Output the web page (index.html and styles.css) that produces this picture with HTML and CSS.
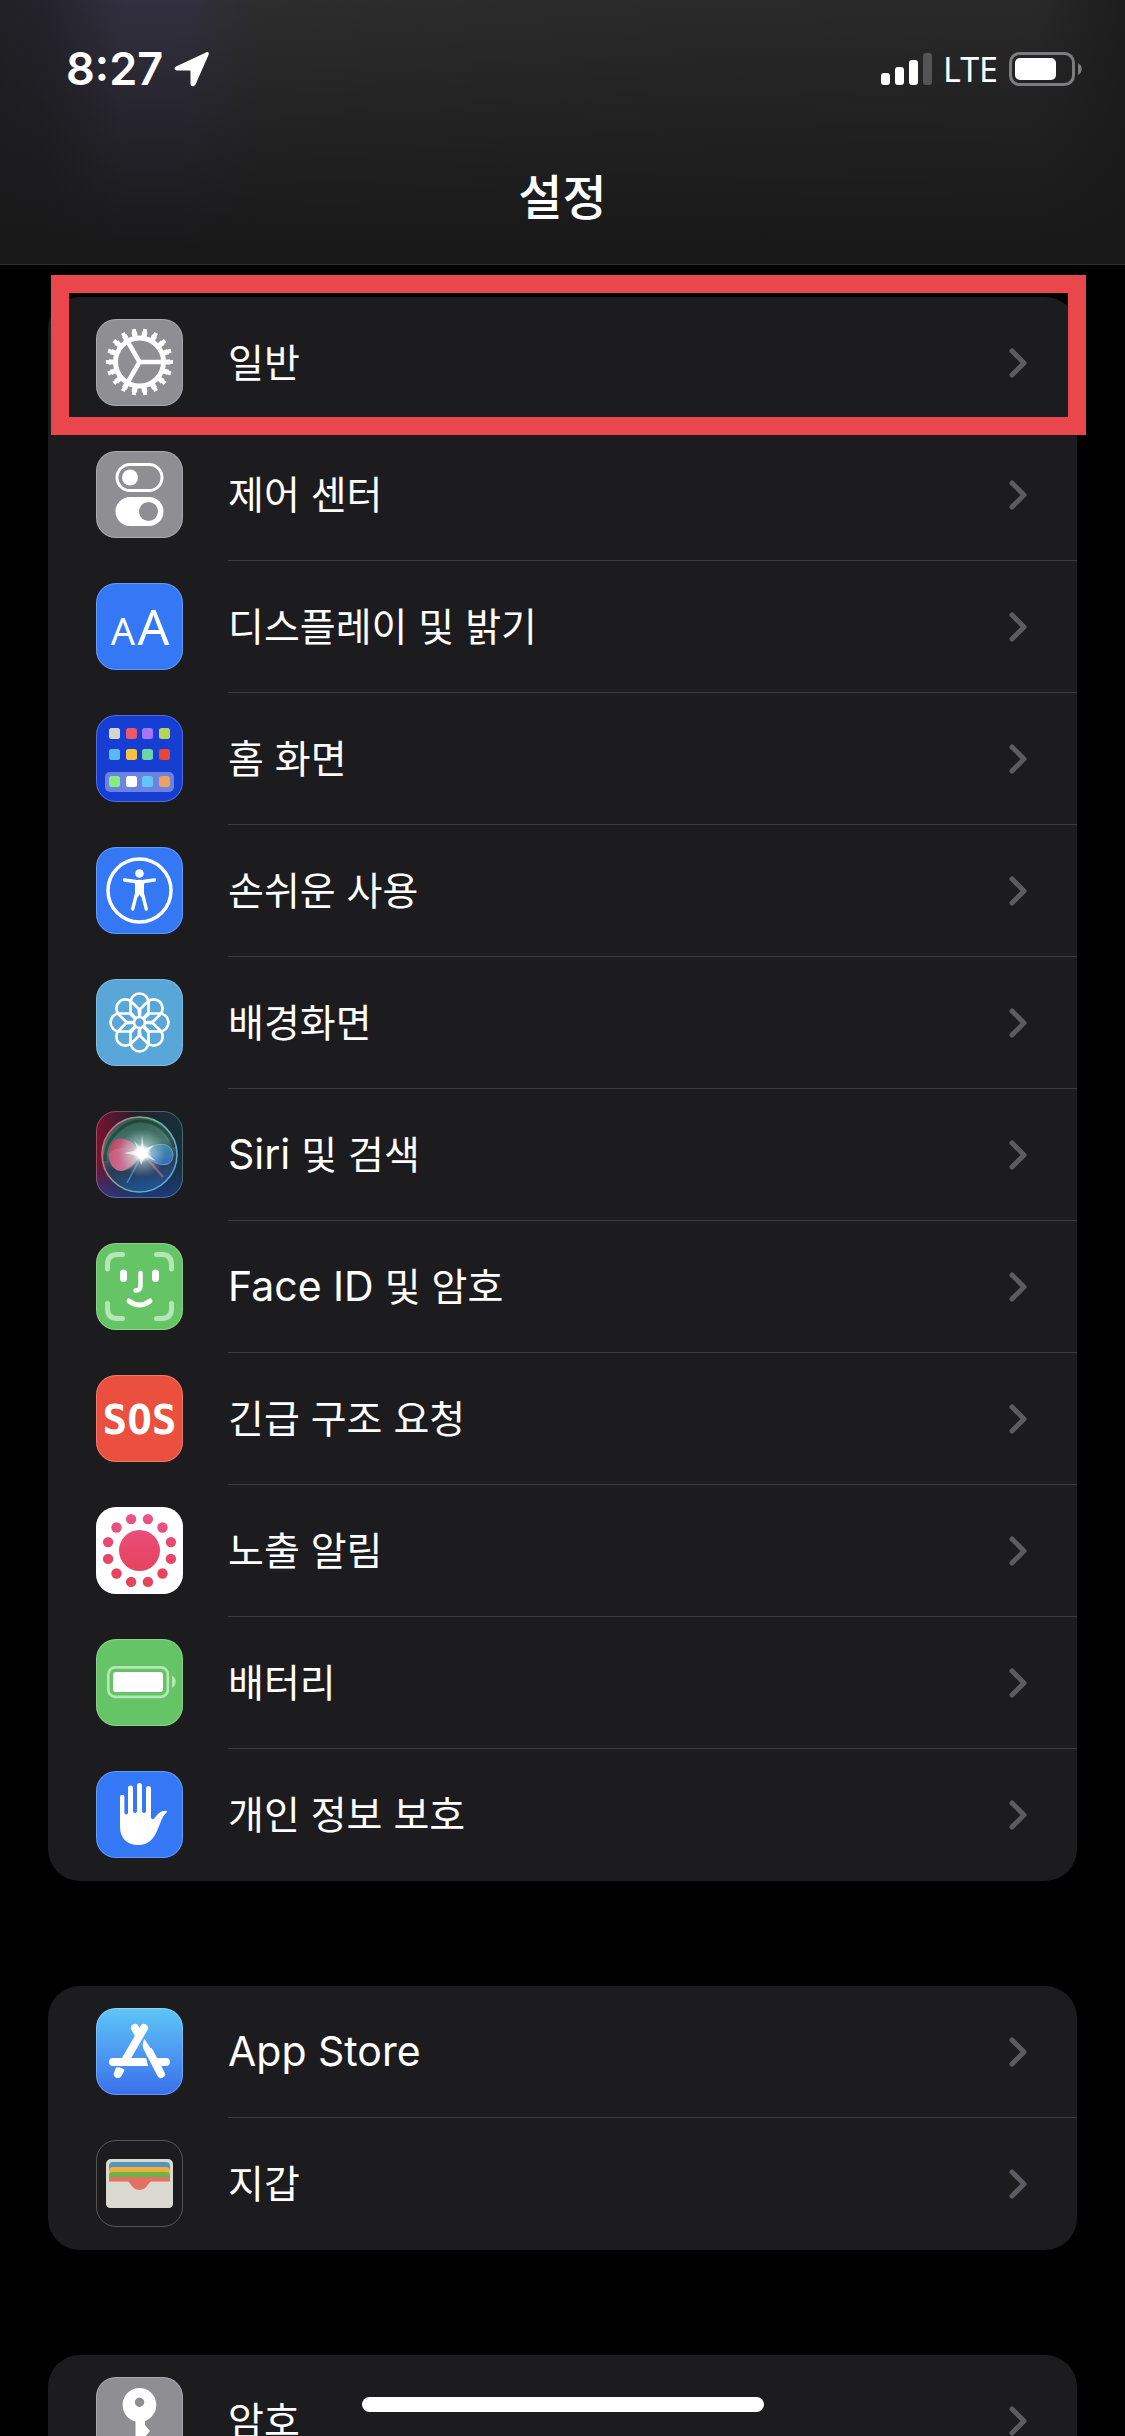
FILE: index.html
```html
<!DOCTYPE html>
<html lang="ko">
<head>
    <meta charset="UTF-8">
    <meta name="viewport" content="width=device-width, initial-scale=1.0">
    <title>설정</title>
    <link rel="stylesheet" href="styles.css">
</head>
<body>
    <!-- Shared shapes -->
    <svg class="defs" aria-hidden="true">
        <defs>
            <symbol id="chevron" viewBox="0 0 18 30">
                <path d="M3 3l12 12L3 27" fill="none" stroke="#5b5b60" stroke-width="5" stroke-linecap="round" stroke-linejoin="round"/>
            </symbol>
            <path id="petal" d="M-9 -20a9 9 0 0 1 18 0V-10L0 0L-9 -10Z"/>
            <linearGradient id="exposureFill" gradientUnits="userSpaceOnUse" x1="0" y1="6" x2="0" y2="80">
                <stop offset="0" stop-color="#e8578c"/>
                <stop offset=".5" stop-color="#e8476a"/>
                <stop offset="1" stop-color="#e74257"/>
            </linearGradient>
            <linearGradient id="siriBack" x1="0" y1="0" x2="1" y2="0">
                <stop offset="0" stop-color="#7a1230"/>
                <stop offset=".45" stop-color="#22202e"/>
                <stop offset="1" stop-color="#14323c"/>
            </linearGradient>
            <linearGradient id="siriLow" x1="0" y1="0" x2="0" y2="1">
                <stop offset=".6" stop-color="#1d3f8c" stop-opacity="0"/>
                <stop offset="1" stop-color="#1d3f8c" stop-opacity=".8"/>
            </linearGradient>
            <linearGradient id="siriOrb" x1=".3" y1="0" x2=".5" y2="1">
                <stop offset="0" stop-color="#2c5a4a"/>
                <stop offset=".4" stop-color="#4b7a72"/>
                <stop offset=".65" stop-color="#2c3a50"/>
                <stop offset="1" stop-color="#1f5596"/>
            </linearGradient>
            <linearGradient id="siriRing" x1="0" y1=".3" x2="1" y2=".7">
                <stop offset="0" stop-color="#d8607c"/>
                <stop offset=".5" stop-color="#6cbc96"/>
                <stop offset="1" stop-color="#5da4e4"/>
            </linearGradient>
            <linearGradient id="siriPink" x1="0" y1="0" x2="1" y2=".3">
                <stop offset="0" stop-color="#d62c58"/>
                <stop offset="1" stop-color="#d0a0b8"/>
            </linearGradient>
            <radialGradient id="siriGlow">
                <stop offset="0" stop-color="#fff"/>
                <stop offset=".2" stop-color="#fff"/>
                <stop offset=".4" stop-color="#d8f4f4" stop-opacity=".5"/>
                <stop offset="1" stop-color="#b8e0dc" stop-opacity="0"/>
            </radialGradient>
        </defs>
    </svg>

    <div class="screen">
        <header class="top">
            <div class="status">
                <div class="status-left">
                    <span class="time">8:27</span>
                    <svg class="location" viewBox="0 0 36 36" aria-hidden="true">
                        <path d="M32 1.500L2 15.500C0 16.500 0 19.500 3 19.500H15.500Q16.500 19.500 16.500 20.500V32.500C16.500 36 20 36 21.500 33.500L34.500 4C35.500 1.500 34 .5 32 1.500Z" fill="#fff"/>
                    </svg>
                </div>
                <div class="status-right">
                    <svg class="signal" viewBox="0 0 51 34" aria-hidden="true">
                        <rect x="0" y="21" width="9" height="12" rx="3" fill="#fff"/>
                        <rect x="14" y="15" width="9" height="18" rx="3" fill="#fff"/>
                        <rect x="28" y="8" width="9" height="25" rx="3" fill="#fff"/>
                        <rect x="42" y="1" width="9" height="32" rx="3" fill="#545456"/>
                    </svg>
                    <span class="carrier">LTE</span>
                    <svg class="charge" viewBox="0 0 74 34" aria-hidden="true">
                        <rect x="1.500" y="1.500" width="63" height="31" rx="9" fill="none" stroke="#7c7c7e" stroke-width="3"/>
                        <rect x="6" y="6" width="41" height="22" rx="5" fill="#fff"/>
                        <path d="M69 11c5 2.500 5 9.500 0 12z" fill="#7c7c7e"/>
                    </svg>
                </div>
            </div>
            <h1>설정</h1>
        </header>

        <main>
            <ul class="group">
                <li class="selected">
                    <a class="row" href="#general">
                        <svg class="icon gray" viewBox="0 0 87 87">
                            <g fill="none" stroke="#fff">
                                <circle cx="43.500" cy="43" r="24" stroke-width="5"/>
                                <circle cx="43.500" cy="43" r="28" stroke-width="5" pathLength="18" stroke-dasharray=".54 .46" stroke-dashoffset=".27"/>
                                <circle cx="43.500" cy="43" r="31.500" stroke-width="4" pathLength="18" stroke-dasharray=".36 .64" stroke-dashoffset=".18"/>
                                <path d="M43.500 43H66M43.500 43L32.500 24M43.500 43L32.500 62" stroke-width="4.500"/>
                            </g>
                        </svg>
                        <span class="label">일반</span>
                        <svg class="chevron"><use href="#chevron"/></svg>
                    </a>
                </li>
                <li>
                    <a class="row" href="#control-center">
                        <svg class="icon gray" viewBox="0 0 87 87">
                            <rect x="21" y="13.500" width="45" height="26" rx="13" fill="none" stroke="#fff" stroke-width="3"/>
                            <circle cx="34" cy="26.500" r="8" fill="#fff"/>
                            <rect x="19.500" y="46" width="48" height="29" rx="14.500" fill="#fff"/>
                            <circle cx="52.500" cy="60.500" r="9.500" fill="#8e8e93"/>
                        </svg>
                        <span class="label">제어 센터</span>
                        <svg class="chevron"><use href="#chevron"/></svg>
                    </a>
                </li>
                <li>
                    <a class="row" href="#display">
                        <svg class="icon blue" viewBox="0 0 87 87">
                            <text class="glyph-a" x="27" y="62" font-size="38">A</text>
                            <text class="glyph-a" x="57.500" y="62" font-size="50">A</text>
                        </svg>
                        <span class="label">디스플레이 및 밝기</span>
                        <svg class="chevron"><use href="#chevron"/></svg>
                    </a>
                </li>
                <li>
                    <a class="row" href="#home-screen">
                        <svg class="icon navy" viewBox="0 0 87 87">
                            <rect x="9" y="57" width="69" height="20" rx="5" fill="#6b82e2"/>
                            <rect x="13" y="13" width="11" height="11" rx="2.500" fill="#d5d7cf"/>
                            <rect x="30" y="13" width="11" height="11" rx="2.500" fill="#e9596b"/>
                            <rect x="46" y="13" width="11" height="11" rx="2.500" fill="#a775f5"/>
                            <rect x="63" y="13" width="11" height="11" rx="2.500" fill="#b6d257"/>
                            <rect x="13" y="34" width="11" height="11" rx="2.500" fill="#5bb9fa"/>
                            <rect x="30" y="34" width="11" height="11" rx="2.500" fill="#f5c344"/>
                            <rect x="46" y="34" width="11" height="11" rx="2.500" fill="#6dd4a8"/>
                            <rect x="63" y="34" width="11" height="11" rx="2.500" fill="#e5483b"/>
                            <rect x="13" y="61" width="11" height="11" rx="2.500" fill="#86ef7c"/>
                            <rect x="30" y="61" width="11" height="11" rx="2.500" fill="#fff"/>
                            <rect x="46" y="61" width="11" height="11" rx="2.500" fill="#62c6fb"/>
                            <rect x="63" y="61" width="11" height="11" rx="2.500" fill="#f0a05a"/>
                        </svg>
                        <span class="label">홈 화면</span>
                        <svg class="chevron"><use href="#chevron"/></svg>
                    </a>
                </li>
                <li>
                    <a class="row" href="#accessibility">
                        <svg class="icon blue" viewBox="0 0 87 87">
                            <circle cx="43.500" cy="43.500" r="31.500" fill="none" stroke="#fff" stroke-width="3.500"/>
                            <circle cx="43.500" cy="26.500" r="4.300" fill="#fff"/>
                            <path d="M28.500 33L39.500 34.500M58.500 33L47.500 34.500M40.500 47L36.700 62M46.500 47L50.300 62" fill="none" stroke="#fff" stroke-width="3.400" stroke-linecap="round"/>
                            <path d="M38 33.200Q43.500 32.200 49 33.200L48 38V46L47 50H45L43.500 47.500L42 50H40L39 46V38Z" fill="#fff"/>
                        </svg>
                        <span class="label">손쉬운 사용</span>
                        <svg class="chevron"><use href="#chevron"/></svg>
                    </a>
                </li>
                <li>
                    <a class="row" href="#wallpaper">
                        <svg class="icon sky" viewBox="0 0 87 87">
                            <g transform="translate(43.500 43.500)" fill="none" stroke="#fff" stroke-width="2.700" stroke-linejoin="round">
                                <use href="#petal"/>
                                <use href="#petal" transform="rotate(45)"/>
                                <use href="#petal" transform="rotate(90)"/>
                                <use href="#petal" transform="rotate(135)"/>
                                <use href="#petal" transform="rotate(180)"/>
                                <use href="#petal" transform="rotate(225)"/>
                                <use href="#petal" transform="rotate(270)"/>
                                <use href="#petal" transform="rotate(315)"/>
                                <circle r="5.500" fill="#58a7d8"/>
                            </g>
                        </svg>
                        <span class="label">배경화면</span>
                        <svg class="chevron"><use href="#chevron"/></svg>
                    </a>
                </li>
                <li>
                    <a class="row" href="#siri">
                        <svg class="icon" viewBox="0 0 87 87">
                            <rect width="87" height="87" fill="url(#siriBack)"/>
                            <rect width="87" height="87" fill="url(#siriLow)"/>
                            <circle cx="43.500" cy="43.500" r="37.500" fill="url(#siriOrb)" stroke="url(#siriRing)" stroke-width="1.600"/>
                            <path d="M9 50C8 26 30 10 44 10C62 10 74 22 78 36" fill="none" stroke="#10251f" stroke-width="3" opacity=".45"/>
                            <path d="M46 43C36 26 16 20 13 40C11 58 26 72 46 43Z" fill="url(#siriPink)" opacity=".85"/>
                            <path d="M46 43C30 34 16 38 13 44C16 66 34 64 46 43Z" fill="#e07a9c" opacity=".35" stroke="#f3b3c4" stroke-width=".8"/>
                            <path d="M46 43C58 30 76 30 77 44C76 58 62 56 46 43Z" fill="#3f8fc8" opacity=".75" stroke="#79c8e8" stroke-width="1"/>
                            <path d="M46 43C60 46 68 50 77 46C70 58 58 54 46 43Z" fill="#3868c8" opacity=".7"/>
                            <path d="M46 44L31 72" stroke="#58a0d8" stroke-width="1.500" opacity=".7"/>
                            <path d="M48 44L67 66" stroke="#c06a90" stroke-width="2.500" opacity=".6"/>
                            <circle cx="46" cy="42" r="24" fill="url(#siriGlow)"/>
                            <path d="M46 24L48 38L58 34L51 42L60 50L49 46L45 54L43 45L28 42L42 39L38 30L45 37Z" fill="#fff" opacity=".7"/>
                        </svg>
                        <span class="label"><span class="latin">Siri</span> 및 검색</span>
                        <svg class="chevron"><use href="#chevron"/></svg>
                    </a>
                </li>
                <li>
                    <a class="row" href="#face-id">
                        <svg class="icon green" viewBox="0 0 87 87">
                            <g fill="none" stroke-linecap="round" stroke-width="5">
                                <path d="M11.500 26V21.500Q11.500 11.500 21.500 11.500H26.500M60.500 11.500H65.500Q75.500 11.500 75.500 21.500V26M75.500 60.500V65.500Q75.500 75.500 65.500 75.500H60.500M26.500 75.500H21.500Q11.500 75.500 11.500 65.500V60.500" stroke="#b5e6b5"/>
                                <path d="M44.500 30V43Q44.500 47.500 39.500 47.500" stroke="#fff" stroke-width="4.500"/>
                                <path d="M33 58Q43.500 66 54 58" stroke="#fff"/>
                                <path d="M27.500 30V35.500M59.500 30V35.500" stroke="#fff" stroke-width="7"/>
                            </g>
                        </svg>
                        <span class="label"><span class="latin">Face ID</span> 및 암호</span>
                        <svg class="chevron"><use href="#chevron"/></svg>
                    </a>
                </li>
                <li>
                    <a class="row" href="#sos">
                        <svg class="icon red" viewBox="0 0 87 87">
                            <text class="glyph-sos" x="43.500" y="59">SOS</text>
                        </svg>
                        <span class="label">긴급 구조 요청</span>
                        <svg class="chevron"><use href="#chevron"/></svg>
                    </a>
                </li>
                <li>
                    <a class="row" href="#exposure">
                        <svg class="icon white" viewBox="0 0 87 87">
                            <circle cx="43.500" cy="43.500" r="20.500" fill="url(#exposureFill)"/>
                            <g fill="url(#exposureFill)">
                                <circle cx="35.100" cy="12.100" r="5.200"/>
                                <circle cx="51.900" cy="12.100" r="5.200"/>
                                <circle cx="66.500" cy="20.500" r="5.200"/>
                                <circle cx="74.900" cy="35.100" r="5.200"/>
                                <circle cx="74.900" cy="51.900" r="5.200"/>
                                <circle cx="66.500" cy="66.500" r="5.200"/>
                                <circle cx="51.900" cy="74.900" r="5.200"/>
                                <circle cx="35.100" cy="74.900" r="5.200"/>
                                <circle cx="20.500" cy="66.500" r="5.200"/>
                                <circle cx="12.100" cy="51.900" r="5.200"/>
                                <circle cx="12.100" cy="35.100" r="5.200"/>
                                <circle cx="20.500" cy="20.500" r="5.200"/>
                            </g>
                        </svg>
                        <span class="label">노출 알림</span>
                        <svg class="chevron"><use href="#chevron"/></svg>
                    </a>
                </li>
                <li>
                    <a class="row" href="#battery">
                        <svg class="icon green" viewBox="0 0 87 87">
                            <rect x="12.300" y="28.300" width="59.500" height="29.500" rx="7" fill="none" stroke="#b5e6b5" stroke-width="2.700"/>
                            <rect x="17" y="33" width="50" height="20" rx="3" fill="#fff"/>
                            <path d="M76 36.500c5 2.500 5 10 0 12.500z" fill="#b5e6b5"/>
                        </svg>
                        <span class="label">배터리</span>
                        <svg class="chevron"><use href="#chevron"/></svg>
                    </a>
                </li>
                <li>
                    <a class="row" href="#privacy">
                        <svg class="icon blue" viewBox="0 0 87 87">
                            <path d="M24 26a2.200 2.200 0 0 1 4.400 0V42q1.800 3 3.600 0V17a2.500 2.500 0 0 1 5 0V40.500q2 3 4 0V14.500a2.500 2.500 0 0 1 5 0V40.500q2 3 4 0V17.500a2.500 2.500 0 0 1 5 0V47q1.500 2.500 4 -.5C62.500 42 66 39 71 40C71.500 41 70.500 41.500 69 43C64 49 62.500 60 57 67C52 73 47 74 42 74C30 74 24 66 24 56Z" fill="#fff"/>
                        </svg>
                        <span class="label">개인 정보 보호</span>
                        <svg class="chevron"><use href="#chevron"/></svg>
                    </a>
                </li>
            </ul>

            <ul class="group">
                <li>
                    <a class="row" href="#app-store">
                        <svg class="icon store" viewBox="0 0 87 87">
                            <g fill="none" stroke="#fff" stroke-width="8" stroke-linecap="round">
                                <path d="M48 20L30 51M39 20L43 27M17 54H47M68 54H70"/>
                                <path d="M53.500 44L65 66"/>
                            </g>
                            <path d="M26 50H50L52 57.500V58H26ZM60 50H68V58H64Z" fill="#fff"/>
                            <path d="M48.500 31C46 35 46.500 39 48 42L52 49L58 45.500Z" fill="#fff"/>
                            <path d="M20 59.500Q25 58.500 28.500 62L25.500 68Q23 71 19.500 69.500Q16.500 67 18.500 63.500Z" fill="#fff"/>
                        </svg>
                        <span class="label"><span class="latin">App Store</span></span>
                        <svg class="chevron"><use href="#chevron"/></svg>
                    </a>
                </li>
                <li>
                    <a class="row" href="#wallet">
                        <svg class="icon dark" viewBox="0 0 87 87">
                            <rect x="10" y="19" width="67" height="49" rx="5" fill="#dad8cf"/>
                            <path d="M13 42V26q0-4 4-4H70q4 0 4 4V42Z" fill="#5596c0"/>
                            <path d="M13 42V31q0-4 4-4H70q4 0 4 4V42Z" fill="#f0b13c"/>
                            <path d="M13 42V36q0-4 4-4H70q4 0 4 4V42Z" fill="#6cb545"/>
                            <path d="M13 43V41q0-4 4-4H70q4 0 4 4V43H56C52 43 52 50 43.500 50S35 43 31 43Z" fill="#e27161"/>
                            <path d="M10 41.500H31C35 41.500 35.500 50 43.500 50S52 41.500 56 41.500H77V63q0 5-5 5H15q-5 0-5-5Z" fill="#dad8cf"/>
                        </svg>
                        <span class="label">지갑</span>
                        <svg class="chevron"><use href="#chevron"/></svg>
                    </a>
                </li>
            </ul>

            <ul class="group">
                <li>
                    <a class="row" href="#passwords">
                        <svg class="icon gray" viewBox="0 0 87 87">
                            <path fill-rule="evenodd" d="M43.500 11a17 17 0 0 1 5.500 33V48L54 54L49 60L53 65L49 69V73L44 78L39.500 73V44.500A17 17 0 0 1 43.500 11ZM43.500 20.500a4.700 4.700 0 1 0 .1 0Z" fill="#fff"/>
                        </svg>
                        <span class="label">암호</span>
                        <svg class="chevron"><use href="#chevron"/></svg>
                    </a>
                </li>
            </ul>
        </main>

        <div class="home-bar"></div>
    </div>
</body>
</html>
```
FILE: styles.css
```css
* {
    box-sizing: border-box;
}

body {
    margin: 0;
    background: #000;
    color: #fff;
    font-family: Inter, "Noto Sans CJK KR", sans-serif;
}

.defs {
    position: absolute;
    width: 0;
    height: 0;
}

.screen {
    position: relative;
    height: 100vh;
    overflow: hidden;
}

/* Header */
.top {
    border-bottom: 1px solid #2b2b2c;
    background:
        linear-gradient(to bottom, rgba(24, 24, 24, 0), #181818 96%),
        linear-gradient(to right, #222126 0%, #24232b 4%, #32303f 11%, #32303f 16%, #2d2d2e 23%, #2a2a2b 60%, #29292a 92%, #1d1d1e 100%);
}

.status {
    display: flex;
    justify-content: space-between;
    align-items: center;
    height: 138px;
    padding: 0 42px 0 66px;
}

.status-left,
.status-right {
    display: flex;
    align-items: center;
    gap: 11px;
}

.time {
    font-size: 45px;
    font-weight: 600;
    line-height: 54px;
}

.location {
    width: 36px;
    height: 36px;
}

.signal {
    width: 51px;
    height: 34px;
}

.carrier {
    font-family: "Noto Sans", sans-serif;
    font-size: 34px;
    line-height: 40px;
}

.charge {
    width: 74px;
    height: 34px;
}

h1 {
    margin: 0;
    padding: 24px 0 30px;
    font-size: 48px;
    font-weight: 500;
    line-height: 72px;
    text-align: center;
}

/* Settings list */
main {
    display: flex;
    flex-direction: column;
    gap: 105px;
    padding: 32px 48px;
}

.group {
    margin: 0;
    padding: 0;
    list-style: none;
    background: #1c1c1e;
    border-radius: 32px;
}

.row {
    display: grid;
    grid-template-columns: 87px 1fr 18px;
    column-gap: 45px;
    align-items: center;
    height: 132px;
    padding: 0 50px 1px 48px;
    color: inherit;
    text-decoration: none;
    background: linear-gradient(#3d3d40, #3d3d40) right bottom / calc(100% - 180px) 1px no-repeat;
}

li:last-child .row {
    background: none;
}

.label {
    font-size: 39px;
    line-height: 62px;
}

.latin {
    font-size: 41px;
}

.chevron {
    width: 18px;
    height: 30px;
}

/* Red frame around the item to tap */
.selected {
    position: relative;
}

.selected::after {
    content: '';
    position: absolute;
    inset: -22px -9px -6px 3px;
    border: 18px solid #e9474c;
    pointer-events: none;
}

/* App icons */
.icon {
    width: 87px;
    height: 87px;
    border-radius: 20px;
    outline: 1px solid rgba(255, 255, 255, 0.25);
    outline-offset: -1px;
}

.gray {
    background: #8e8e93;
}

.blue {
    background: #3478f6;
}

.navy {
    background: #173ed3;
}

.sky {
    background: #58a7d8;
}

.green {
    background: #65c466;
}

.red {
    background: #eb4f3d;
}

.white {
    background: #fff;
}

.store {
    background: linear-gradient(#5fc6f7, #3a6fec);
}

.dark {
    background: #1c1c1e;
}

.glyph-a {
    font-family: "Noto Sans", sans-serif;
    fill: #fff;
    text-anchor: middle;
}

.glyph-sos {
    font-family: "DejaVu Sans Mono", monospace;
    font-size: 41px;
    font-weight: 700;
    fill: #fff;
    text-anchor: middle;
}

.home-bar {
    position: absolute;
    left: 50%;
    bottom: 24px;
    width: 402px;
    height: 15px;
    margin-left: -201px;
    border-radius: 8px;
    background: #fff;
}
```
